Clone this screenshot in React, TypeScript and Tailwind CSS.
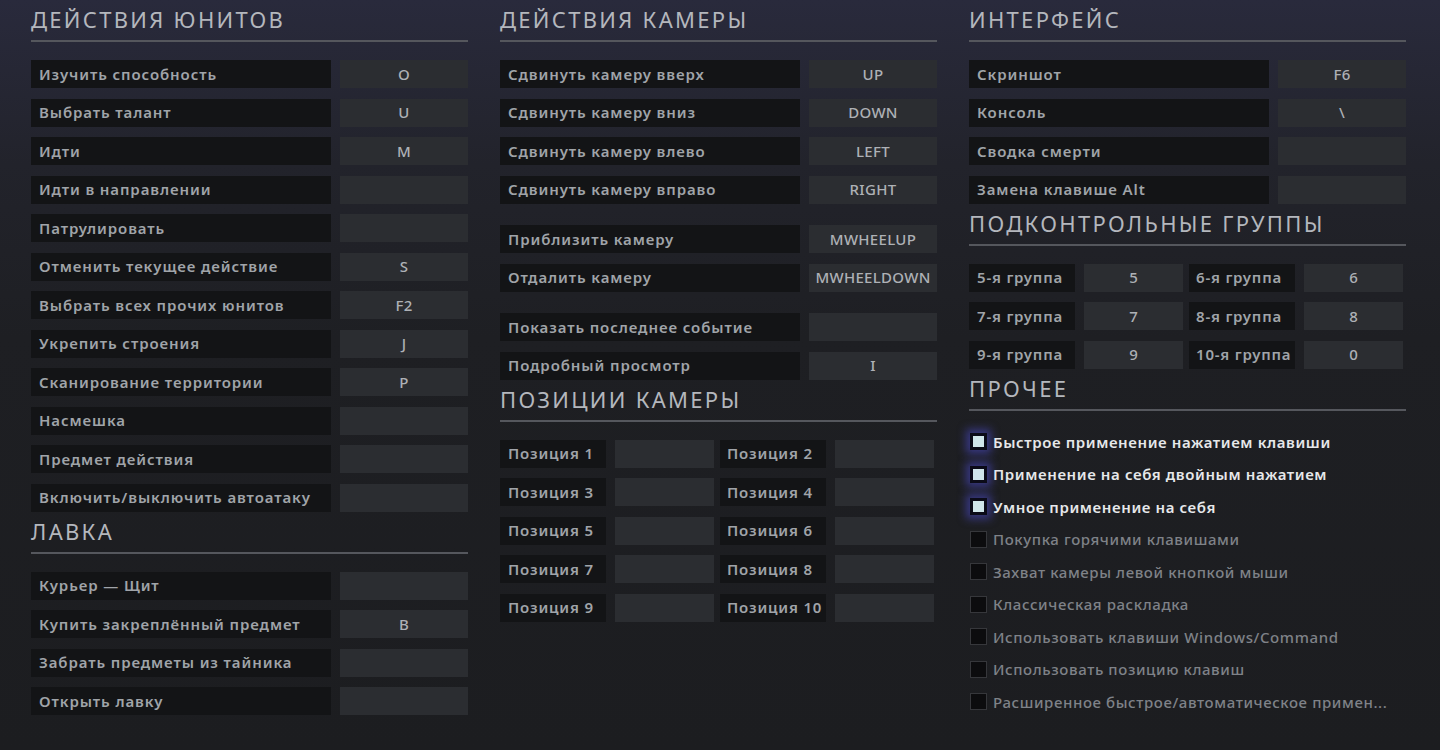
import React from 'react';

type Bind = { label: string; keyName?: string; spaced?: boolean };

const FONT = { fontFamily: '"Noto Sans", "Open Sans", sans-serif' };

function SectionTitle({ title }: { title: string }) {
  return (
    <div className="mt-[5px]">
      <div className="h-[28px] text-[22px] leading-[28px] tracking-[2.3px] text-[#b4b7bd] uppercase">
        {title}
      </div>
      <div className="mt-[7px] h-[2px] bg-[#55575d]" />
    </div>
  );
}

function BindRow({ label, keyName, spaced }: Bind) {
  return (
    <div className={`flex h-[28px] gap-[9px] ${spaced ? 'mt-[11px]' : ''}`}>
      <div className="flex w-[300px] items-center bg-[#131416] pl-[8px] text-[15px] font-semibold tracking-[0.9px] text-[#a0a4a9]">
        {label}
      </div>
      <div className="flex flex-1 items-center justify-center bg-[#2b2d31] text-[15px] font-medium tracking-[0.3px] text-[#aeb1b6]">
        {keyName}
      </div>
    </div>
  );
}

function BindList({ items }: { items: Bind[] }) {
  return (
    <div className="mt-[18px] flex flex-col gap-[10.5px]">
      {items.map((b) => (
        <BindRow key={b.label} {...b} />
      ))}
    </div>
  );
}

function PairGrid({ rows }: { rows: [string, string, string, string][] }) {
  return (
    <div className="mt-[18px] flex flex-col gap-[10.5px]">
      {rows.map((r) => (
        <div key={r[0]} className="flex h-[28px]">
          <div className="flex w-[106px] items-center bg-[#131416] pl-[8px] text-[15px] font-semibold tracking-[0.8px] text-[#a0a4a9]">
            {r[0]}
          </div>
          <div className="ml-[9px] flex w-[99px] items-center justify-center bg-[#2b2d31] text-[15px] font-medium text-[#aeb1b6]">
            {r[1]}
          </div>
          <div className="ml-[6px] flex w-[106px] items-center bg-[#131416] pl-[7px] text-[15px] font-semibold tracking-[0.8px] text-[#a0a4a9]">
            {r[2]}
          </div>
          <div className="ml-[9px] flex w-[99px] items-center justify-center bg-[#2b2d31] text-[15px] font-medium text-[#aeb1b6]">
            {r[3]}
          </div>
        </div>
      ))}
    </div>
  );
}

function CheckRow({ label, checked }: { label: string; checked?: boolean }) {
  return (
    <div className="flex h-[32.5px] items-center gap-[6px]">
      {checked ? (
        <div className="h-[17px] w-[17px] shrink-0 border-[3px] border-[#0b0b18] bg-[#cfe5ea] shadow-[0_0_8px_4px_rgba(72,72,190,0.6)]" />
      ) : (
        <div className="h-[17px] w-[17px] shrink-0 border border-[#36373b] bg-[#0c0c0e]" />
      )}
      <span
        className={`text-[15px] tracking-[0.6px] whitespace-nowrap ${
          checked ? 'font-semibold text-[#e6e8ea]' : 'font-medium text-[#7f8288]'
        }`}
      >
        {label}
      </span>
    </div>
  );
}

const unitActions: Bind[] = [
  { label: 'Изучить способность', keyName: 'O' },
  { label: 'Выбрать талант', keyName: 'U' },
  { label: 'Идти', keyName: 'M' },
  { label: 'Идти в направлении' },
  { label: 'Патрулировать' },
  { label: 'Отменить текущее действие', keyName: 'S' },
  { label: 'Выбрать всех прочих юнитов', keyName: 'F2' },
  { label: 'Укрепить строения', keyName: 'J' },
  { label: 'Сканирование территории', keyName: 'P' },
  { label: 'Насмешка' },
  { label: 'Предмет действия' },
  { label: 'Включить/выключить автоатаку' },
];

const shop: Bind[] = [
  { label: 'Курьер — Щит' },
  { label: 'Купить закреплённый предмет', keyName: 'B' },
  { label: 'Забрать предметы из тайника' },
  { label: 'Открыть лавку' },
];

const camera: Bind[] = [
  { label: 'Сдвинуть камеру вверх', keyName: 'UP' },
  { label: 'Сдвинуть камеру вниз', keyName: 'DOWN' },
  { label: 'Сдвинуть камеру влево', keyName: 'LEFT' },
  { label: 'Сдвинуть камеру вправо', keyName: 'RIGHT' },
  { label: 'Приблизить камеру', keyName: 'MWHEELUP', spaced: true },
  { label: 'Отдалить камеру', keyName: 'MWHEELDOWN' },
  { label: 'Показать последнее событие', spaced: true },
  { label: 'Подробный просмотр', keyName: 'I' },
];

const iface: Bind[] = [
  { label: 'Скриншот', keyName: 'F6' },
  { label: 'Консоль', keyName: '\\' },
  { label: 'Сводка смерти' },
  { label: 'Замена клавише Alt' },
];

const positions: [string, string, string, string][] = [
  ['Позиция 1', '', 'Позиция 2', ''],
  ['Позиция 3', '', 'Позиция 4', ''],
  ['Позиция 5', '', 'Позиция 6', ''],
  ['Позиция 7', '', 'Позиция 8', ''],
  ['Позиция 9', '', 'Позиция 10', ''],
];

const groups: [string, string, string, string][] = [
  ['5-я группа', '5', '6-я группа', '6'],
  ['7-я группа', '7', '8-я группа', '8'],
  ['9-я группа', '9', '10-я группа', '0'],
];

const options = [
  { label: 'Быстрое применение нажатием клавиши', checked: true },
  { label: 'Применение на себя двойным нажатием', checked: true },
  { label: 'Умное применение на себя', checked: true },
  { label: 'Покупка горячими клавишами' },
  { label: 'Захват камеры левой кнопкой мыши' },
  { label: 'Классическая раскладка' },
  { label: 'Использовать клавиши Windows/Command' },
  { label: 'Использовать позицию клавиш' },
  { label: 'Расширенное быстрое/автоматическое примен...' },
];

export default function App() {
  return (
    <div
      style={FONT}
      className="h-[750px] w-full overflow-hidden bg-[linear-gradient(180deg,#292a3c_0%,#22232b_22%,#1e1f23_45%,#1c1d20_100%)]"
    >
      <div className="flex gap-[32px] pl-[31px]">
        <div className="flex w-[437px] flex-col">
          <SectionTitle title="Действия юнитов" />
          <BindList items={unitActions} />
          <SectionTitle title="Лавка" />
          <BindList items={shop} />
        </div>

        <div className="flex w-[437px] flex-col">
          <SectionTitle title="Действия камеры" />
          <BindList items={camera} />
          <SectionTitle title="Позиции камеры" />
          <PairGrid rows={positions} />
        </div>

        <div className="flex w-[437px] flex-col">
          <SectionTitle title="Интерфейс" />
          <BindList items={iface} />
          <SectionTitle title="Подконтрольные группы" />
          <PairGrid rows={groups} />
          <SectionTitle title="Прочее" />
          <div className="mt-[15px] flex flex-col pl-[1px]">
            {options.map((o) => (
              <CheckRow key={o.label} label={o.label} checked={o.checked} />
            ))}
          </div>
        </div>
      </div>
    </div>
  );
}
